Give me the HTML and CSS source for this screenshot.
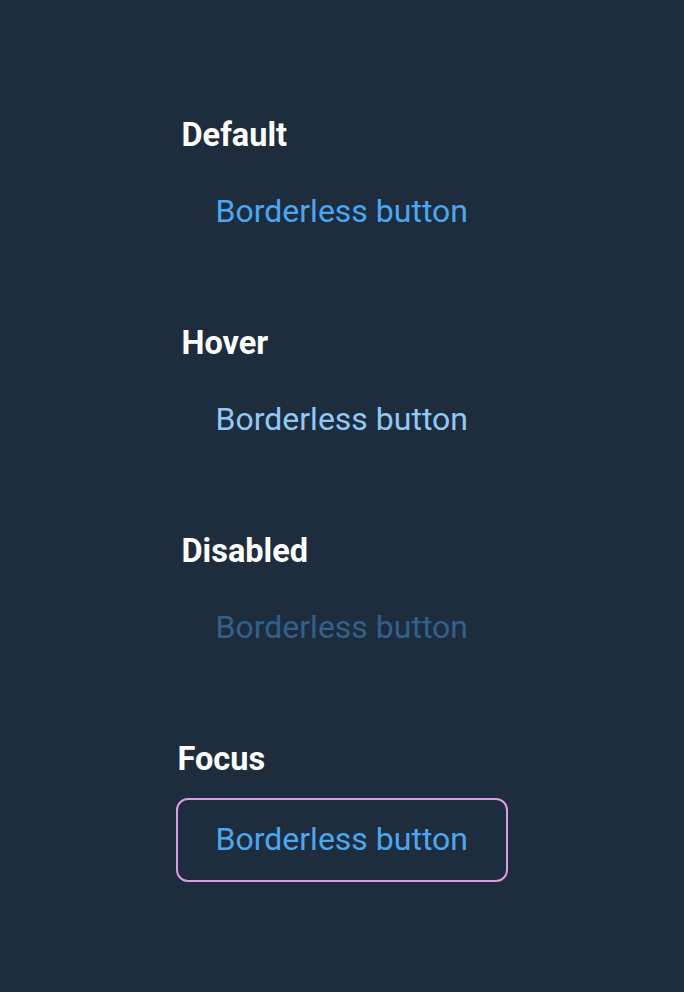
FILE: index.html
```html
<!DOCTYPE html>
<html lang="en">
<head>
<meta charset="utf-8">
<title>Borderless button states</title>
<link rel="stylesheet" href="styles.css">
</head>
<body>
<main class="page">
  <section class="state">
    <h2 class="state-title">Default</h2>
    <button class="btn btn-default" type="button">Borderless button</button>
  </section>
  <section class="state">
    <h2 class="state-title">Hover</h2>
    <button class="btn btn-hover" type="button">Borderless button</button>
  </section>
  <section class="state">
    <h2 class="state-title">Disabled</h2>
    <button class="btn btn-disabled" type="button" disabled>Borderless button</button>
  </section>
  <section class="state state-focus">
    <h2 class="state-title">Focus</h2>
    <button class="btn btn-focus" type="button">Borderless button</button>
  </section>
</main>
</body>
</html>
```
FILE: styles.css
```css
html, body {
  margin: 0;
  padding: 0;
  background: #1e2d3d;
}
body {
  font-family: Roboto, "Noto Sans", "Liberation Sans", sans-serif;
  min-height: 992px;
}
.page {
  width: 331px;
  margin: 0 auto;
  padding-top: 115px;
  display: flex;
  flex-direction: column;
  gap: 71px;
}
.state {
  display: flex;
  flex-direction: column;
  align-items: flex-start;
  gap: 15px;
  padding-left: 5px;
}
.state-focus {
  padding-left: 1px;
  gap: 19px;
}
.state-title {
  margin: 0;
  font-size: 32.5px;
  line-height: 40px;
  font-weight: 700;
  color: #ffffff;
  white-space: nowrap;
}
.btn {
  font-family: inherit;
  font-size: 32px;
  line-height: 40px;
  font-weight: 400;
  white-space: nowrap;
  background: transparent;
  border: 2px solid transparent;
  border-radius: 12px;
  padding: 19px 37px 19px 32px;
  margin: 0;
  cursor: pointer;
}
.btn-default { color: #4ca6f0; }
.btn-hover { color: #90c9f6; }
.btn-disabled { color: #31608c; cursor: default; }
.btn-focus {
  color: #4ca6f0;
  border-color: #d6a0e2;
  margin-left: -2px;
  padding: 19px 38px 21px;
}
```
